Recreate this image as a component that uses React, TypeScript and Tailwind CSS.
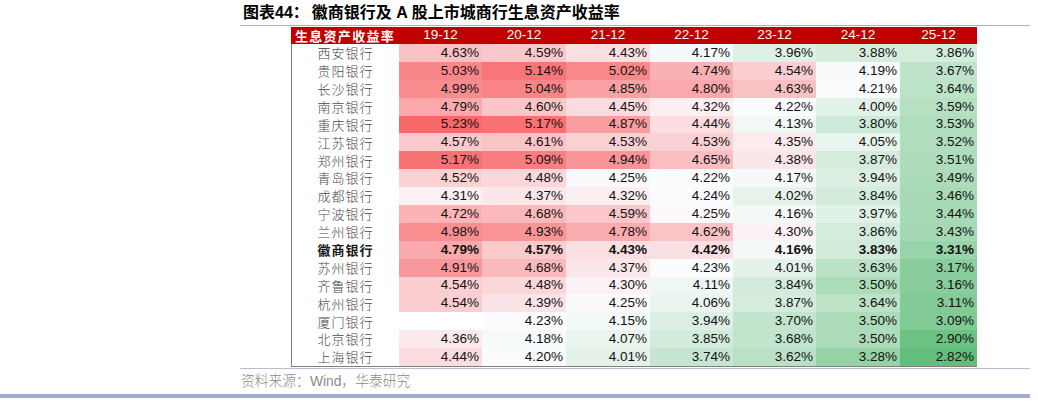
import * as React from "react"

type Row = { name: string; values: (number | null)[]; bold?: boolean }

const years = ["19-12", "20-12", "21-12", "22-12", "23-12", "24-12", "25-12"]

const rows: Row[] = [
  { name: "西安银行", values: [4.63, 4.59, 4.43, 4.17, 3.96, 3.88, 3.86] },
  { name: "贵阳银行", values: [5.03, 5.14, 5.02, 4.74, 4.54, 4.19, 3.67] },
  { name: "长沙银行", values: [4.99, 5.04, 4.85, 4.8, 4.63, 4.21, 3.64] },
  { name: "南京银行", values: [4.79, 4.6, 4.45, 4.32, 4.22, 4.0, 3.59] },
  { name: "重庆银行", values: [5.23, 5.17, 4.87, 4.44, 4.13, 3.8, 3.53] },
  { name: "江苏银行", values: [4.57, 4.61, 4.53, 4.53, 4.35, 4.05, 3.52] },
  { name: "郑州银行", values: [5.17, 5.09, 4.94, 4.65, 4.38, 3.87, 3.51] },
  { name: "青岛银行", values: [4.52, 4.48, 4.25, 4.22, 4.17, 3.94, 3.49] },
  { name: "成都银行", values: [4.31, 4.37, 4.32, 4.24, 4.02, 3.84, 3.46] },
  { name: "宁波银行", values: [4.72, 4.68, 4.59, 4.25, 4.16, 3.97, 3.44] },
  { name: "兰州银行", values: [4.98, 4.93, 4.78, 4.62, 4.3, 3.86, 3.43] },
  { name: "徽商银行", values: [4.79, 4.57, 4.43, 4.42, 4.16, 3.83, 3.31], bold: true },
  { name: "苏州银行", values: [4.91, 4.68, 4.37, 4.23, 4.01, 3.63, 3.17] },
  { name: "齐鲁银行", values: [4.54, 4.48, 4.3, 4.11, 3.84, 3.5, 3.16] },
  { name: "杭州银行", values: [4.54, 4.39, 4.25, 4.06, 3.87, 3.64, 3.11] },
  { name: "厦门银行", values: [null, 4.23, 4.15, 3.94, 3.7, 3.5, 3.09] },
  { name: "北京银行", values: [4.36, 4.18, 4.07, 3.85, 3.68, 3.5, 2.9] },
  { name: "上海银行", values: [4.44, 4.2, 4.01, 3.74, 3.62, 3.28, 2.82] },
]

// column widths in px: label + 7 periods
const colW = [108, 83, 84, 84, 83, 83, 84, 77]

// Excel-style 3 colour scale: green (min) - white (median) - red (max)
const all = rows.flatMap((r) => r.values.filter((v): v is number => v !== null)).sort((a, b) => a - b)
const min = all[0]
const max = all[all.length - 1]
const pos = (all.length - 1) * 0.5
const mid = all[Math.floor(pos)] + (all[Math.ceil(pos)] - all[Math.floor(pos)]) * (pos - Math.floor(pos))

const mix = (a: number[], b: number[], t: number) =>
  `rgb(${a.map((c, i) => Math.round(c + (b[i] - c) * t)).join(",")})`

const cellColor = (v: number | null) => {
  if (v === null) return "#ffffff"
  const white = [252, 252, 255]
  if (v >= mid) return mix(white, [248, 105, 107], (v - mid) / (max - mid))
  return mix(white, [99, 190, 123], (mid - v) / (mid - min))
}

const App: React.FC = () => {
  return (
    <div className="w-[1038px] h-[403px] bg-white overflow-hidden">
      {/* Title */}
      <div className="ml-[240px] w-[790px] h-[26px] border-b border-[#a3b3c8] flex items-center text-[16px] font-bold text-black font-['Liberation_Sans','Noto_Sans_CJK_SC',sans-serif]">
        <span className="pl-[3px]">图表44：</span>
        <span className="ml-[3px]">徽商银行及 A 股上市城商行生息资产收益率</span>
      </div>

      {/* Table */}
      <div className="ml-[291px] mt-[1px] w-[686px] font-['Liberation_Sans',sans-serif] text-[13.5px]">
        <div className="flex h-[17px] bg-[#c00000] text-white">
          <div
            style={{ width: colW[0] }}
            className="flex items-center justify-center font-bold text-[13px] tracking-[1.3px] font-['Noto_Sans_CJK_SC',serif]"
          >
            生息资产收益率
          </div>
          {years.map((y, i) => (
            <div key={y} style={{ width: colW[i + 1] }} className="flex items-center justify-center">
              {y}
            </div>
          ))}
        </div>

        <div className="border-l border-b border-[#7f7f7f]">
          {rows.map((r) => (
            <div key={r.name} className={`flex h-[17.9px] ${r.bold ? "font-bold" : ""}`}>
              <div
                style={{ width: colW[0] - 1 }}
                className={`flex items-center justify-center text-[13px] tracking-[1px] font-['Noto_Sans_CJK_SC',serif] ${
                  r.bold ? "text-[#1a1a1a]" : "text-[#4a4a4a] font-light"
                }`}
              >
                {r.name}
              </div>
              {r.values.map((v, i) => (
                <div
                  key={i}
                  style={{ width: colW[i + 1], backgroundColor: cellColor(v) }}
                  className="flex items-center justify-end pr-[3px] text-[#111]"
                >
                  {v === null ? "" : `${v.toFixed(2)}%`}
                </div>
              ))}
            </div>
          ))}
        </div>
      </div>

      {/* Source */}
      <div className="ml-[240px] mt-[1px] w-[790px] border-t border-[#b4c0d0] h-[26px] flex items-center">
        <span className="inline-block origin-left scale-x-[0.92] text-[15px] font-light text-[#8c8c8c] font-['Liberation_Sans','Noto_Sans_CJK_SC',sans-serif] pl-[1px]">
          资料来源：Wind，华泰研究
        </span>
      </div>

      <div className="w-[1030px] h-[4px] bg-[#9fb1c8]" />
    </div>
  )
}

export default App
